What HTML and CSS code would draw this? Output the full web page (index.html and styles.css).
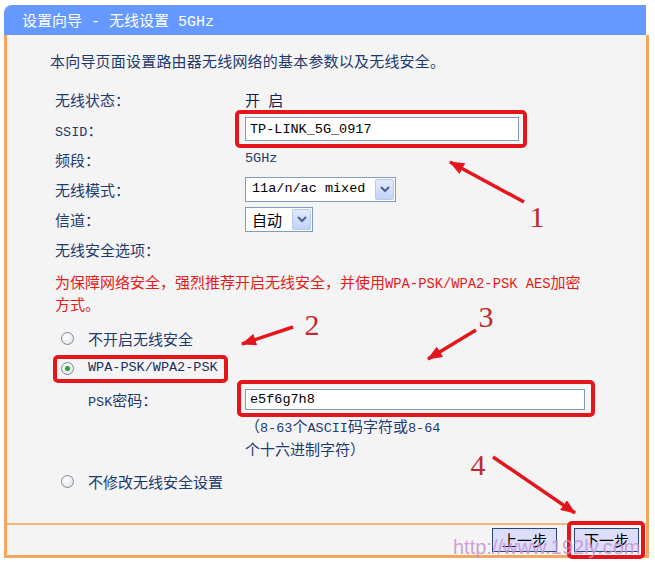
FILE: index.html
```html
<!DOCTYPE html>
<html lang="zh-CN">
<head>
    <meta charset="UTF-8" />
    <meta name="viewport" content="width=device-width, initial-scale=1" />
    <title>设置向导 - 无线设置 5GHz</title>
    <link rel="stylesheet" href="styles.css">
</head>
<body>
    <div class="wizard">
        <div class="title">设置向导<span class="en"> - </span>无线设置<span class="en"> 5GHz</span></div>
        <div class="frame">
            <div class="content">
                <p class="intro">本向导页面设置路由器无线网络的基本参数以及无线安全。</p>
                <div class="form">
                    <div class="row"><span>无线状态：</span><span class="state">开<span class="en"> </span>启</span></div>
                    <div class="row"><span><span class="en">SSID</span>：</span><input class="text ssid" type="text" value="TP-LINK_5G_0917" /></div>
                    <div class="row"><span>频段：</span><span class="en">5GHz</span></div>
                    <div class="row">
                        <span>无线模式：</span>
                        <div class="select mode">
                            <span class="en">11a/n/ac mixed</span>
                            <span class="drop"><svg width="12" height="10" viewBox="0 0 12 10"><path d="M2 3 L6 7 L10 3" fill="none" stroke="#4a5f8c" stroke-width="2"/></svg></span>
                        </div>
                    </div>
                    <div class="row">
                        <span>信道：</span>
                        <div class="select channel">
                            <span class="pick">自动</span>
                            <span class="drop"><svg width="12" height="10" viewBox="0 0 12 10"><path d="M2 3 L6 7 L10 3" fill="none" stroke="#4a5f8c" stroke-width="2"/></svg></span>
                        </div>
                    </div>
                    <div class="row"><span>无线安全选项：</span></div>
                    <p class="warn">为保障网络安全，强烈推荐开启无线安全，并使用<span class="en">WPA-PSK/WPA2-PSK AES</span>加密<br>方式。</p>
                    <div class="option first"><span class="radio"></span>不开启无线安全</div>
                    <div class="option"><span class="radio checked"></span><span class="en strong">WPA-PSK/WPA2-PSK</span></div>
                    <div class="psk"><span><span class="en">PSK</span>密码：</span><input class="text key" type="text" value="e5f6g7h8" /></div>
                    <p class="hint">（<span class="en">8-63</span>个<span class="en">ASCII</span>码字符或<span class="en">8-64</span><br>个十六进制字符）</p>
                    <div class="option last"><span class="radio"></span>不修改无线安全设置</div>
                </div>
            </div>
            <div class="footer">
                <button class="btn">上一步</button>
                <button class="btn">下一步</button>
            </div>
        </div>
    </div>

    <!-- annotations drawn over the screenshot -->
    <svg class="marks" width="655" height="562" viewBox="0 0 655 562">
        <defs>
            <marker id="head" markerUnits="userSpaceOnUse" markerWidth="16" markerHeight="12" refX="14" refY="6" orient="auto">
                <path d="M0 0 L15 6 L0 12 z" fill="#e3161d"/>
            </marker>
        </defs>
        <g fill="none" stroke="#e3161d" stroke-width="4">
            <rect x="237" y="112" width="288" height="34" rx="3"/>
            <rect x="55" y="357" width="171" height="24" rx="3"/>
            <rect x="239" y="382" width="354" height="33" rx="3"/>
            <rect x="569" y="523" width="74" height="34" rx="3"/>
        </g>
        <g stroke="#e3161d" stroke-width="3.5">
            <line x1="524" y1="202" x2="450" y2="162" marker-end="url(#head)"/>
            <line x1="293" y1="327" x2="242" y2="344" marker-end="url(#head)"/>
            <line x1="476" y1="330" x2="428" y2="359" marker-end="url(#head)"/>
            <line x1="493" y1="457" x2="575" y2="513" marker-end="url(#head)"/>
        </g>
        <g class="num">
            <text x="537" y="227">1</text>
            <text x="312" y="335">2</text>
            <text x="486" y="327">3</text>
            <text x="478" y="475">4</text>
        </g>
    </svg>
    <div class="watermark">http://www.192ly.com</div>
</body>
</html>
```

FILE: styles.css
```css
body { margin: 0; background: #fff; font-family: "Noto Sans CJK SC", sans-serif; font-size: 15px; color: #1f3a6f; }
.en { font-family: "Liberation Mono", "Noto Sans CJK SC", monospace; font-size: 13.5px; line-height: 1; white-space: pre; }
.en.strong { color: #1a2f5c; }

.wizard { width: 645px; margin: 5px 0 0 4px; }
.title { height: 30px; line-height: 30px; margin-right: 3px; padding-left: 18px; background: #6699ff; color: #fff; border-radius: 8px 0 0 0; }
.title .en { font-size: 15px; }
.frame { border: 3px solid #f4a65e; border-top: none; background: #f4f4f4; }
.content { height: 488px; box-sizing: border-box; padding: 11px 0 0 43px; }
.intro { margin: 0; line-height: 30px; letter-spacing: 0.2px; }

.form { margin: 8px 0 0 5px; }
.row { display: grid; grid-template-columns: 190px auto; justify-items: start; align-items: center; height: 30px; }
.state { color: #10244d; }

.text { box-sizing: border-box; height: 24px; padding: 0 4px; border: 1px solid #7f9db9; background: #fff; color: #000; font-family: "Liberation Mono", monospace; font-size: 13.5px; outline: none; }
.ssid { width: 274px; }
.key { width: 340px; height: 21px; }

.select { box-sizing: border-box; display: flex; align-items: center; justify-content: space-between; height: 25px; padding: 0 1px 0 6px; border: 1px solid #7f9db9; background: #fff; color: #000; }
.select.mode { width: 151px; }
.select.channel { width: 68px; }
.drop { box-sizing: border-box; display: flex; align-items: center; justify-content: center; width: 19px; height: 21px; border: 1px solid #b6c9f0; border-radius: 2px; background: linear-gradient(#e2ebfd, #c3d3f8); }

.warn { margin: 7px 0 0; line-height: 22px; color: #e31b1b; white-space: nowrap; }
.warn .en { font-size: 13.8px; }

.option { display: flex; align-items: center; height: 30px; padding-left: 6px; }
.option.first { margin-top: 8px; }
.option.last { margin-top: 6px; }
.radio { box-sizing: border-box; width: 13px; height: 13px; margin-right: 14px; border: 1px solid #7b8a99; border-radius: 50%; background: radial-gradient(circle at 40% 35%, #fff, #d9dde2); position: relative; }
.radio.checked::after { content: ""; position: absolute; left: 3px; top: 3px; width: 5px; height: 5px; border-radius: 50%; background: #2aa12a; }

.psk { display: grid; grid-template-columns: 157px auto; justify-items: start; align-items: center; height: 30px; margin-top: 1px; padding-left: 33px; }
.hint { margin: 0 0 0 190px; line-height: 23px; }

.footer { box-sizing: border-box; height: 32px; border-top: 2px solid #f5b67c; display: flex; justify-content: flex-end; align-items: center; gap: 17px; padding-right: 7px; }
.btn { width: 65px; height: 24px; padding: 0; border: 1px solid #2c4577; background: #dcdcfb; color: #000; font-family: "Noto Sans CJK SC", sans-serif; font-size: 15px; line-height: 20px; }

.marks { position: absolute; left: 0; top: 0; pointer-events: none; }
.num text { font-family: "Liberation Serif", serif; font-size: 30px; fill: #c0282d; text-anchor: middle; }
.watermark { position: absolute; left: 453px; top: 537px; font-family: "Liberation Sans", sans-serif; font-size: 20px; line-height: 20px; color: rgba(196, 146, 208, 0.85); pointer-events: none; }
```
